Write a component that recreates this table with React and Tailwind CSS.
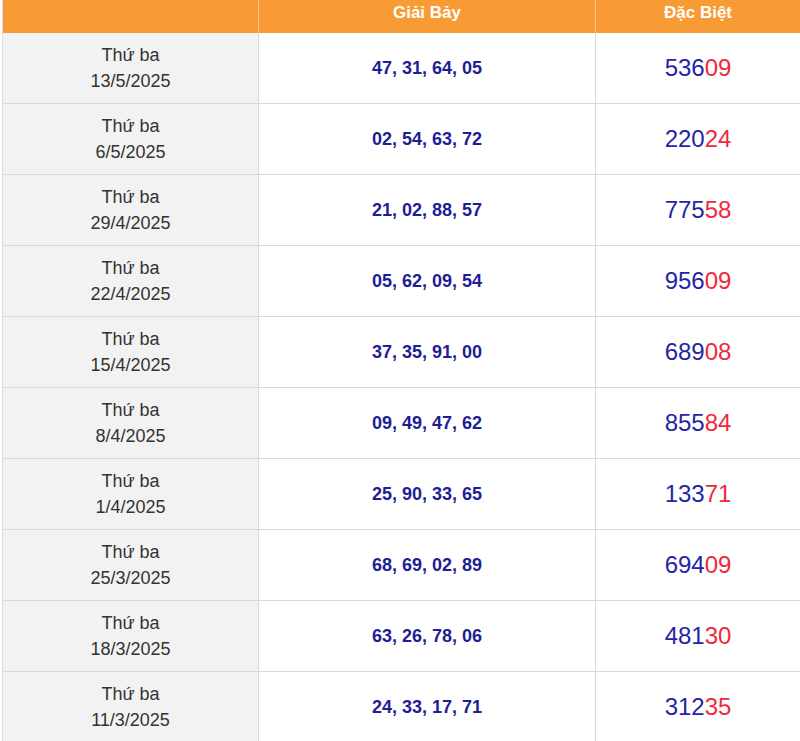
const rows = [
  ["13/5/2025", "47, 31, 64, 05", "536", "09"],
  ["6/5/2025", "02, 54, 63, 72", "220", "24"],
  ["29/4/2025", "21, 02, 88, 57", "775", "58"],
  ["22/4/2025", "05, 62, 09, 54", "956", "09"],
  ["15/4/2025", "37, 35, 91, 00", "689", "08"],
  ["8/4/2025", "09, 49, 47, 62", "855", "84"],
  ["1/4/2025", "25, 90, 33, 65", "133", "71"],
  ["25/3/2025", "68, 69, 02, 89", "694", "09"],
  ["18/3/2025", "63, 26, 78, 06", "481", "30"],
  ["11/3/2025", "24, 33, 17, 71", "312", "35"],
];

export default function App() {
  return (
    <div className="w-[800px] h-[741px] overflow-hidden bg-white pl-[2px] font-['Liberation_Sans',Arial,sans-serif]">
      <div className="border-l border-[#dcdcdc]">
        {/* header */}
        <div className="grid grid-cols-[256px_337px_1fr] h-[33px] bg-[#f99b34] text-white font-bold text-[17px]">
          <div className="border-r border-[#fbc48a]"></div>
          <div className="flex items-center justify-center border-r border-[#fbc48a] pb-[8px]">
            Giải Bảy
          </div>
          <div className="flex items-center justify-center pb-[8px]">Đặc Biệt</div>
        </div>

        {rows.map(([date, g7, head, tail]) => (
          <div
            key={date}
            className="grid grid-cols-[256px_337px_1fr] h-[71px] border-b border-[#d9d9d9]"
          >
            <div className="bg-[#f2f2f2] border-r border-[#d9d9d9] flex flex-col items-center justify-center text-[18px] leading-[26px] text-[#333]">
              <span>Thứ ba</span>
              <span>{date}</span>
            </div>
            <div className="border-r border-[#d9d9d9] flex items-center justify-center font-bold text-[18px] text-[#1e1e96]">
              {g7}
            </div>
            <div className="flex items-center justify-center text-[24px]">
              <span className="text-[#2424a8]">{head}</span>
              <span className="text-[#f0283c]">{tail}</span>
            </div>
          </div>
        ))}
      </div>
    </div>
  );
}
